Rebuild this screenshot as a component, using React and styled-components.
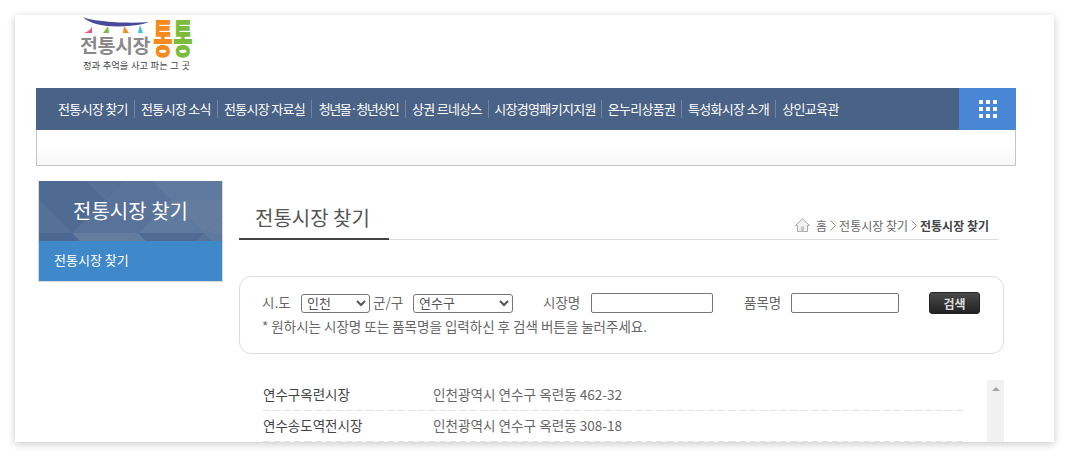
import React from 'react'
import styled, { createGlobalStyle } from 'styled-components'

const menus = [
  { label: '전통시장 찾기', width: 82 },
  { label: '전통시장 소식', width: 83 },
  { label: '전통시장 자료실', width: 94 },
  { label: '청년몰·청년상인', width: 94, tight: true },
  { label: '상권 르네상스', width: 83 },
  { label: '시장경영패키지지원', width: 113 },
  { label: '온누리상품권', width: 80 },
  { label: '특성화시장 소개', width: 94 },
  { label: '상인교육관', width: 70 },
]

const markets = [
  { name: '연수구옥련시장', address: '인천광역시 연수구 옥련동 462-32' },
  { name: '연수송도역전시장', address: '인천광역시 연수구 옥련동 308-18' },
]

// triangles of the side title background, one colour string per row
const shades = ['#4f6a93', '#567198', '#5f7a9f', '#4c6792', '#647d9f', '#587299']
const rows = [
  { top: -14, start: -33, pick: [0, 0, 1, 5, 2, 2, 4, 2, 3, 3, 3, 1, 5, 2] },
  { top: 19, start: -66, pick: [0, 1, 0, 5, 5, 2, 4, 4, 2, 3, 0, 3, 4, 2] },
  { top: 52, start: -33, pick: [3, 3, 4, 4, 0, 5, 2, 0, 3, 3, 5, 2, 4, 0] },
]
const tiles = rows.flatMap((row) =>
  row.pick.map((shade, i) => {
    const x = row.start + i * 33
    const points =
      i % 2 === 0
        ? `${x},${row.top} ${x + 66},${row.top} ${x + 33},${row.top + 33}`
        : `${x},${row.top + 33} ${x + 66},${row.top + 33} ${x + 33},${row.top}`
    return { points, fill: shades[shade] }
  })
)

const App = () => {
  return (
    <Page>
      <GlobalStyle />
      <Card>
        <Header>
          <Logo>
            <Bunting viewBox="0 0 66 17">
              <path d="M0 0 C 8 4, 40 7, 66 5 L 60 7 C 40 11, 10 11, 0 0 Z" fill="#4a4a9c" />
              <path d="M9 8 C 9 12, 6 14, 1 16 L 9 16 Z" fill="#ef4f87" />
              <path d="M25 9 L 23 12 L 20 16 L 26 16 Z" fill="#7dbb3c" />
              <path d="M41 9 L 40 16 L 46 16 Z" fill="#f58a1f" />
              <path d="M57 8 L 55 16 L 60 16 Z" fill="#3fbdec" />
            </Bunting>
            <LogoTitle>
              <LogoGray>전통시장</LogoGray>
              <LogoBig $color="#f58a1f">통</LogoBig>
              <LogoBig $color="#7dbb3c">통</LogoBig>
            </LogoTitle>
            <Tagline>정과 추억을 사고 파는 그 곳</Tagline>
          </Logo>
        </Header>

        <Nav>
          <MenuList>
            {menus.map((menu, i) => (
              <MenuItem key={menu.label} $first={i === 0} $width={menu.width} $tight={menu.tight}>
                {menu.label}
              </MenuItem>
            ))}
          </MenuList>
          <AllMenu>
            <svg width="18" height="18" viewBox="0 0 18 18" fill="#fff">
              {[0, 7, 14].map((y) =>
                [0, 7, 14].map((x) => <rect key={`${x}-${y}`} x={x} y={y} width="4" height="4" />)
              )}
            </svg>
          </AllMenu>
        </Nav>
        <SubBar />

        <Body>
          <Side>
            <SideHead>
              <SidePattern viewBox="0 0 183 60" preserveAspectRatio="none">
                {tiles.map((t) => (
                  <polygon key={t.points} points={t.points} fill={t.fill} />
                ))}
              </SidePattern>
              <SideTitle>전통시장 찾기</SideTitle>
            </SideHead>
            <SideLink>전통시장 찾기</SideLink>
          </Side>

          <Content>
            <TitleRow>
              <PageTitle>전통시장 찾기</PageTitle>
              <Crumbs>
                <svg width="15" height="14" viewBox="0 0 15 14">
                  <path d="M7.5 .8 L14.5 7.5 H12.5 V13.5 H2.5 V7.5 H.5 Z" fill="#f1f1f1" stroke="#a9a9a9" />
                  <rect x="6" y="8.5" width="3" height="5" fill="#c4c4c4" />
                </svg>
                <Crumb $left={6}>홈</Crumb>
                <Chevron viewBox="0 0 6 11">
                  <path d="M.5 .5 L5.5 5.5 L.5 10.5" />
                </Chevron>
                <Crumb>전통시장 찾기</Crumb>
                <Chevron viewBox="0 0 6 11">
                  <path d="M.5 .5 L5.5 5.5 L.5 10.5" />
                </Chevron>
                <Crumb $current>전통시장 찾기</Crumb>
              </Crumbs>
            </TitleRow>

            <SearchBox>
              <SearchRow>
                <Label $width={27}>시.도</Label>
                <Select $width={69} $left={12}>
                  <option>인천</option>
                </Select>
                <Label $left={3} $width={29}>군/구</Label>
                <Select $width={100} $left={11}>
                  <option>연수구</option>
                </Select>
                <Label $left={30} $width={37}>시장명</Label>
                <TextInput $left={11} />
                <Label $left={31} $width={36}>품목명</Label>
                <TextInput $left={11} $width={108} />
                <SearchButton>검색</SearchButton>
              </SearchRow>
              <Hint>* 원하시는 시장명 또는 품목명을 입력하신 후 검색 버튼을 눌러주세요.</Hint>
            </SearchBox>

            <ListArea>
              <MarketList>
                {markets.map((m) => (
                  <MarketRow key={m.name}>
                    <MarketName>{m.name}</MarketName>
                    <MarketAddress>{m.address}</MarketAddress>
                  </MarketRow>
                ))}
              </MarketList>
              <ScrollTrack>
                <ScrollArrow />
              </ScrollTrack>
            </ListArea>
          </Content>
        </Body>
      </Card>
    </Page>
  )
}

const GlobalStyle = createGlobalStyle`
  html, body {
    margin: 0;
    padding: 0;
    background: #fff;
  }
  * {
    box-sizing: border-box;
  }
  body {
    font-family: "Noto Sans CJK KR", "Noto Sans", sans-serif;
    color: #555;
  }
`

const Page = styled.div`
  width: 1069px;
  height: 457px;
  padding: 15px;
  overflow: hidden;
`

const Card = styled.div`
  width: 1039px;
  height: 427px;
  background: #fff;
  overflow: hidden;
  box-shadow: 0 2px 8px rgba(0, 0, 0, 0.22);
`

const Header = styled.div`
  height: 73px;
  padding-left: 65px;
`

const Logo = styled.div`
  width: 116px;
  position: relative;
  display: flex;
  flex-direction: column;
  align-items: flex-start;
`

const Bunting = styled.svg`
  position: absolute;
  top: 2px;
  left: 3px;
  width: 66px;
  height: 17px;
`

const LogoTitle = styled.div`
  display: flex;
  align-items: flex-end;
  height: 43px;
  white-space: nowrap;
`

const LogoGray = styled.span`
  width: 73px;
  font-size: 19.5px;
  line-height: 20px;
  font-weight: 700;
  letter-spacing: -0.4px;
  color: #8a8a8a;
  margin-bottom: 3px;
`

const LogoBig = styled.span`
  display: inline-block;
  width: 20px;
  font-family: "Liberation Sans", "Noto Sans CJK KR", sans-serif;
  font-size: 21.5px;
  line-height: 21px;
  margin-bottom: 7px;
  font-weight: 900;
  color: ${(p) => p.$color};
  transform: scaleY(1.85);
`

const Tagline = styled.div`
  font-family: "Liberation Sans", "Noto Sans CJK KR", sans-serif;
  font-size: 9.3px;
  line-height: 11px;
  margin: 3px 0 0 3px;
  color: #444;
  white-space: nowrap;
`

const Nav = styled.div`
  margin-left: 21px;
  width: 980px;
  height: 42px;
  background: #4a6285;
  display: flex;
  justify-content: space-between;
`

const MenuList = styled.ul`
  list-style: none;
  margin: 0;
  padding: 0 0 0 16px;
  display: flex;
  align-items: center;
`

const MenuItem = styled.li`
  width: ${(p) => p.$width}px;
  height: 18px;
  line-height: 18px;
  font-size: 13px;
  text-align: center;
  color: #fff;
  letter-spacing: ${(p) => (p.$tight ? '-1.45px' : '-0.7px')};
  white-space: nowrap;
  ${(p) => (p.$first ? '' : 'border-left: 1px solid #6f84a2;')}
`

const AllMenu = styled.div`
  width: 57px;
  background: #4a86d6;
  display: flex;
  align-items: center;
  justify-content: center;
`

const SubBar = styled.div`
  margin-left: 21px;
  width: 980px;
  height: 36px;
  border: 1px solid #c4c4c4;
  border-top: 0;
  background: linear-gradient(#fff 40%, #f7f7f7);
`

const Body = styled.div`
  display: flex;
  align-items: flex-start;
  padding: 15px 0 0 23px;
`

const Side = styled.div`
  width: 185px;
  border: 1px solid #d8d8d8;
  border-top: 0;
`

const SideHead = styled.div`
  position: relative;
  height: 60px;
  background: #4f6a93;
  overflow: hidden;
  display: flex;
  align-items: center;
  justify-content: center;
`

const SidePattern = styled.svg`
  position: absolute;
  inset: 0;
  width: 100%;
  height: 100%;
`

const SideTitle = styled.h2`
  position: relative;
  margin: -1px 0 0;
  font-size: 20px;
  font-weight: 400;
  color: #fff;
  line-height: 28px;
  white-space: nowrap;
`

const SideLink = styled.div`
  height: 40px;
  padding-left: 15px;
  background: #3f88c9;
  color: #fff;
  font-size: 13px;
  line-height: 38px;
`

const Content = styled.div`
  width: 765px;
  margin-left: 16px;
`

const TitleRow = styled.div`
  position: relative;
  width: 760px;
  height: 59px;
  border-bottom: 1px solid #ddd;
  display: flex;
  align-items: flex-end;
  justify-content: space-between;
`

const PageTitle = styled.h3`
  margin: 0 0 -1px;
  width: 150px;
  height: 35px;
  padding-left: 16px;
  border-bottom: 2px solid #444;
  font-size: 20px;
  font-weight: 400;
  line-height: 26px;
  color: #555;
  white-space: nowrap;
`

const Crumbs = styled.div`
  display: flex;
  align-items: center;
  height: 18px;
  margin-bottom: 5px;
  padding-right: 10px;
  font-size: 12px;
  color: #666;
  white-space: nowrap;
`

const Crumb = styled.span`
  margin-left: ${(p) => p.$left || 0}px;
  font-weight: ${(p) => (p.$current ? 700 : 400)};
  color: ${(p) => (p.$current ? '#444' : '#666')};
`

const Chevron = styled.svg`
  width: 6px;
  height: 11px;
  margin: 0 3px;
  fill: none;
  stroke: #888;
`

const SearchBox = styled.div`
  margin-top: 36px;
  width: 765px;
  height: 78px;
  border: 1px solid #ddd;
  border-radius: 12px;
  padding: 15px 23px 0 22px;
`

const SearchRow = styled.div`
  display: flex;
  align-items: center;
  height: 22px;
`

const Label = styled.span`
  width: ${(p) => p.$width}px;
  margin: -2px 0 0 ${(p) => p.$left || 0}px;
  font-size: 13.5px;
  color: #666;
  white-space: nowrap;
`

const Select = styled.select`
  width: ${(p) => p.$width}px;
  height: 19px;
  margin-left: ${(p) => p.$left}px;
  padding: 0 0 2px 1px;
  font-family: "Liberation Sans", "Noto Sans CJK KR", sans-serif;
  font-size: 13px;
  line-height: 15px;
  color: #555;
  background: #fff;
  border: 1px solid #767676;
  border-radius: 3px;
`

const TextInput = styled.input`
  width: ${(p) => p.$width || 122}px;
  height: 20px;
  margin-left: ${(p) => p.$left}px;
  border: 1px solid #767676;
  border-radius: 2px;
  background: #fff;
`

const SearchButton = styled.button`
  width: 51px;
  height: 22px;
  margin-left: 30px;
  padding: 0;
  border: 1px solid #222;
  border-radius: 3px;
  background: linear-gradient(#4a4a4a, #222);
  color: #ddd;
  font-family: inherit;
  font-size: 12px;
  font-weight: 700;
`

const Hint = styled.p`
  margin: 3px 0 0;
  font-size: 13.5px;
  line-height: 18px;
  color: #666;
  white-space: nowrap;
`

const ListArea = styled.div`
  display: flex;
  justify-content: space-between;
  width: 765px;
  margin-top: 26px;
`

const MarketList = styled.div`
  width: 700px;
  margin-left: 24px;
`

const MarketRow = styled.div`
  display: flex;
  align-items: center;
  height: 31px;
  padding-bottom: 3px;
  background: repeating-linear-gradient(90deg, #e2e2e2 0 7.34px, transparent 7.34px 10.34px) left bottom / 100% 1px no-repeat;
`

const MarketName = styled.span`
  width: 170px;
  font-size: 13.5px;
  color: #444;
  white-space: nowrap;
`

const MarketAddress = styled.span`
  font-size: 13.6px;
  color: #666;
  white-space: nowrap;
`

const ScrollTrack = styled.div`
  width: 17px;
  height: 62px;
  background: #f1f1f1;
  padding: 7px 0 0 5px;
`

const ScrollArrow = styled.div`
  width: 0;
  height: 0;
  border-left: 4px solid transparent;
  border-right: 4px solid transparent;
  border-bottom: 4px solid #a3a3a3;
`

export default App
